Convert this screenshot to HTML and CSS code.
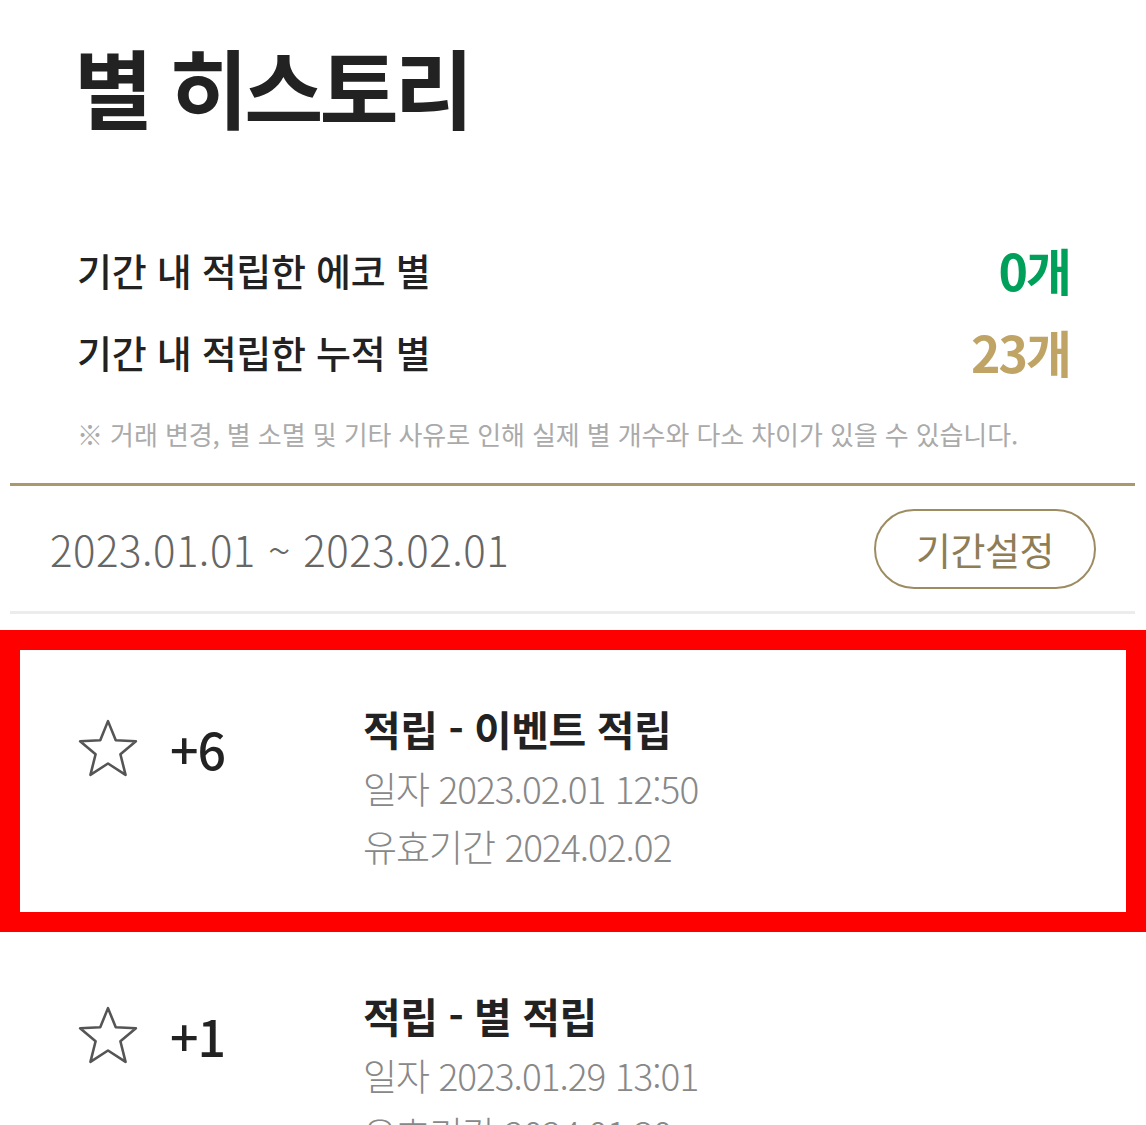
FILE: index.html
```html
<!DOCTYPE html>
<html lang="ko">
<head>
<meta charset="utf-8">
<link rel="stylesheet" href="styles.css">
</head>
<body>
<div class="page">
  <header class="header">
    <h1 class="title">별 히스토리</h1>
  </header>
  <section class="summary">
    <div class="sum-row">
      <span class="sum-label">기간 내 적립한 에코 별</span>
      <span class="sum-value eco">0개</span>
    </div>
    <div class="sum-row">
      <span class="sum-label">기간 내 적립한 누적 별</span>
      <span class="sum-value total">23개</span>
    </div>
    <p class="note">※ 거래 변경, 별 소멸 및 기타 사유로 인해 실제 별 개수와 다소 차이가 있을 수 있습니다.</p>
  </section>
  <div class="gold-line"></div>
  <div class="period">
    <span class="period-text">2023.01.01 ~ 2023.02.01</span>
    <button class="period-btn">기간설정</button>
  </div>
  <div class="gray-line"></div>
  <ul class="list">
    <li class="item highlight">
      <div class="item-left">
        <svg class="star" viewBox="0 0 60 58" width="62" height="60"><polygon points="30,3 37.5,21.5 57,22.5 42,35 47,55 30,44 13,55 18,35 3,22.5 22.5,21.5" fill="none" stroke="#555" stroke-width="2.5" stroke-linejoin="round"/></svg>
        <span class="amount">+6</span>
      </div>
      <div class="item-body">
        <div class="item-title">적립 - 이벤트 적립</div>
        <div class="item-meta">일자 2023.02.01 12:50</div>
        <div class="item-meta">유효기간 2024.02.02</div>
      </div>
    </li>
    <li class="item">
      <div class="item-left">
        <svg class="star" viewBox="0 0 60 58" width="62" height="60"><polygon points="30,3 37.5,21.5 57,22.5 42,35 47,55 30,44 13,55 18,35 3,22.5 22.5,21.5" fill="none" stroke="#555" stroke-width="2.5" stroke-linejoin="round"/></svg>
        <span class="amount">+1</span>
      </div>
      <div class="item-body">
        <div class="item-title">적립 - 별 적립</div>
        <div class="item-meta">일자 2023.01.29 13:01</div>
        <div class="item-meta">유효기간 2024.01.30</div>
      </div>
    </li>
  </ul>
</div>
</body>
</html>
```

FILE: styles.css
```css
html, body {
  margin: 0;
  padding: 0;
  background: #fff;
}
body {
  font-family: "Noto Sans CJK KR", "Noto Sans", sans-serif;
  color: #222;
  overflow: hidden;
  height: 1125px;
}
.page {
  width: 1146px;
}
.header {
  height: 190px;
  padding-left: 74px;
  box-sizing: border-box;
  padding-top: 31px;
}
.title {
  margin: 0;
  font-size: 86px;
  font-weight: 700;
  line-height: 110px;
  letter-spacing: -4px;
  color: #222;
}
.summary {
  padding: 38px 76px 0 77px;
}
.sum-row {
  display: flex;
  justify-content: space-between;
  align-items: center;
  height: 82px;
}
.sum-label {
  font-size: 38px;
  font-weight: 500;
  letter-spacing: -0.3px;
  color: #222;
}
.sum-value {
  font-size: 50px;
  font-weight: 700;
  letter-spacing: -2px;
}
.sum-value.eco { color: #00a05a; }
.sum-value.total { color: #c0a466; }
.note {
  margin: 22px 0 0;
  font-size: 26px;
  line-height: 40px;
  color: #aaa;
  letter-spacing: -0.1px;
}
.gold-line {
  margin: 29px 11px 0 10px;
  height: 3px;
  background: #a8996e;
}
.period {
  display: flex;
  justify-content: space-between;
  align-items: center;
  height: 125px;
  padding: 0 50px 0 50px;
}
.period-text {
  font-size: 42px;
  font-weight: 300;
  color: #666;
  letter-spacing: 0.5px;
}
.period-btn {
  width: 222px;
  height: 80px;
  border: 2.5px solid #9d8c62;
  border-radius: 40px;
  background: #fff;
  font-family: inherit;
  font-size: 38px;
  font-weight: 400;
  color: #8e7d55;
  letter-spacing: -0.5px;
  padding: 0;
}
.gray-line {
  margin: 0 11px 0 10px;
  height: 3px;
  background: #ececec;
}
.list {
  list-style: none;
  margin: 0;
  padding: 16px 0 0;
}
.item {
  display: flex;
  align-items: flex-start;
  padding: 52px 0 40px 77px;
}
.item.highlight {
  border: 20px solid #ff0000;
  padding: 47px 0 20px 57px;
  box-sizing: content-box;
  height: 195px;
}
.item-left {
  display: flex;
  align-items: center;
  width: 286px;
  margin-top: 21px;
}
.star {
  display: block;
}
.amount {
  margin-left: 31px;
  font-size: 50px;
  line-height: 60px;
  font-weight: 500;
  color: #222;
  letter-spacing: -1px;
}
.item-body {
  display: flex;
  flex-direction: column;
}
.item-title {
  font-size: 41px;
  font-weight: 700;
  line-height: 62px;
  letter-spacing: -0.5px;
  color: #222;
}
.item-meta {
  font-size: 37px;
  font-weight: 300;
  line-height: 58px;
  color: #888;
  letter-spacing: -1px;
}
```
